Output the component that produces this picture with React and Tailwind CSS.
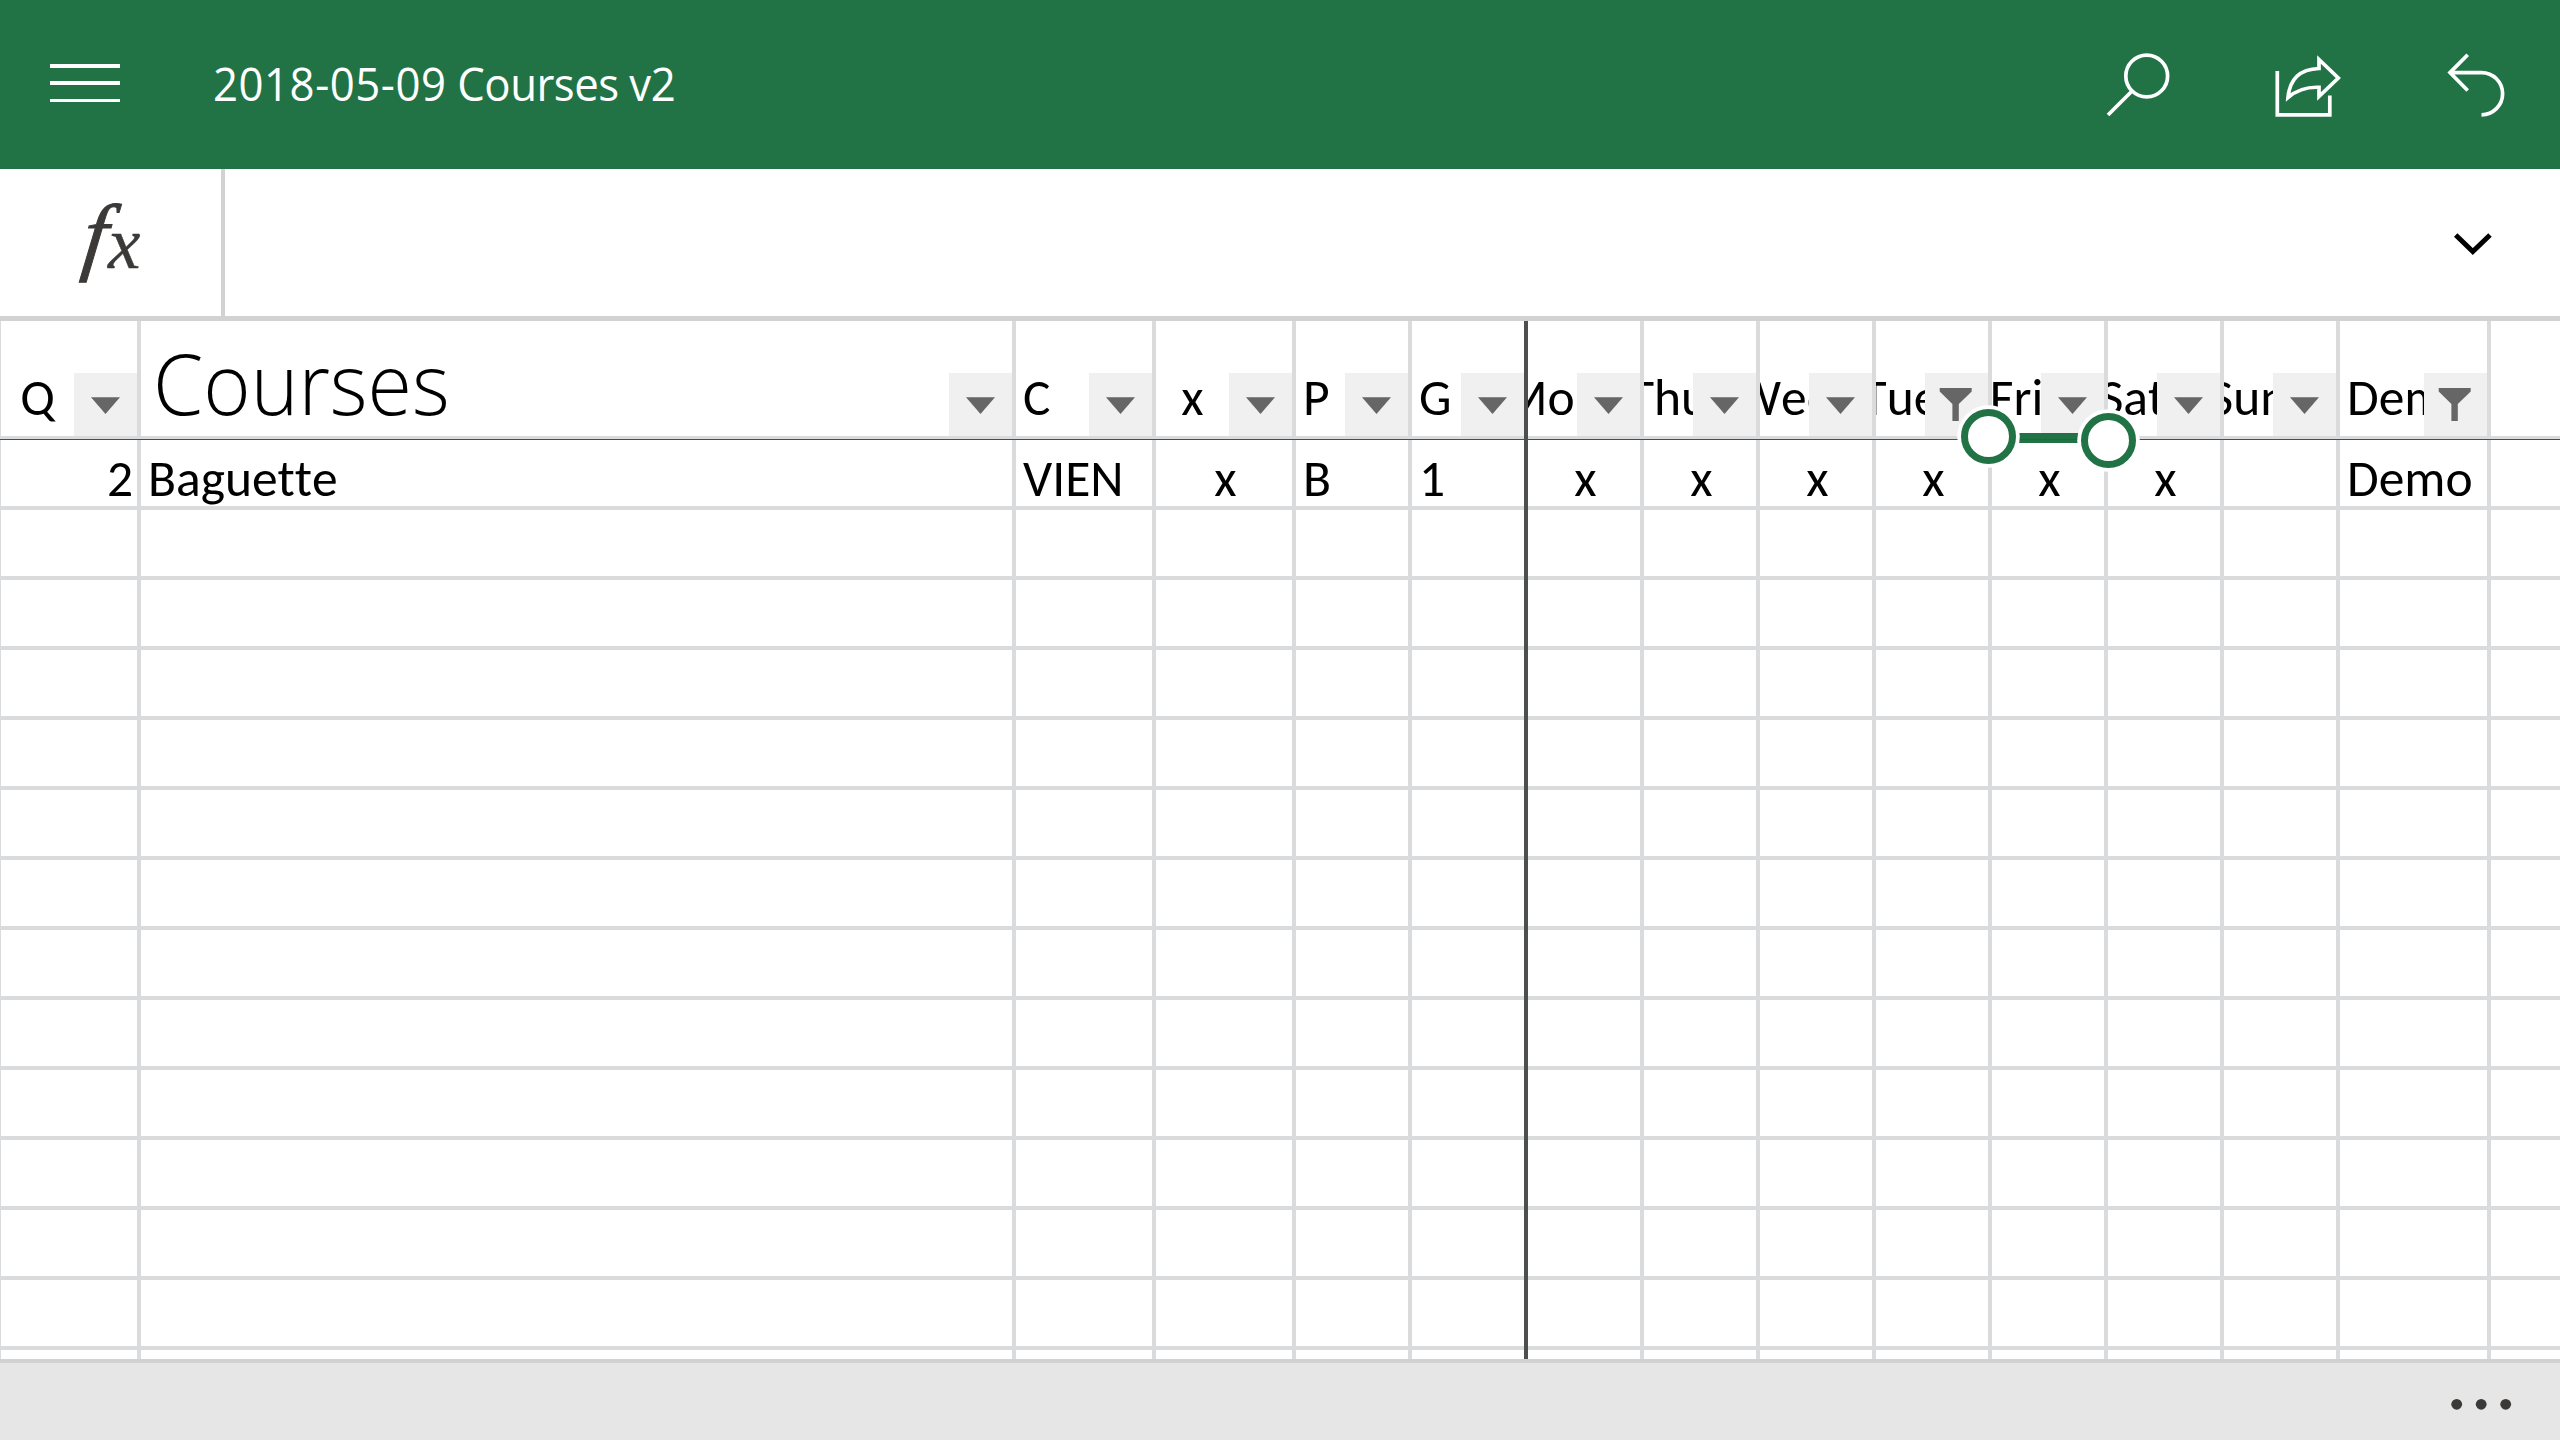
const cols = [
  { k: "Q", w: "w-[141px]", align: "center", v: "2", va: "right" },
  { k: "Courses", w: "w-[875px]", align: "title", v: "Baguette", va: "left" },
  { k: "C", w: "w-[140px]", align: "left", v: "VIEN", va: "left" },
  { k: "x", w: "w-[140px]", align: "center", v: "x", va: "center" },
  { k: "P", w: "w-[116px]", align: "left", v: "B", va: "left" },
  { k: "G", w: "w-[116px]", align: "left", v: "1", va: "left", frozen: true },
  { k: "Mon", w: "w-[116px]", align: "center", v: "x", va: "center" },
  { k: "Thu", w: "w-[116px]", align: "center", v: "x", va: "center" },
  { k: "Wed", w: "w-[116px]", align: "center", v: "x", va: "center" },
  { k: "Tue", w: "w-[116px]", align: "center", v: "x", va: "center", funnel: true },
  { k: "Fri", w: "w-[116px]", align: "center", v: "x", va: "center" },
  { k: "Sat", w: "w-[116px]", align: "center", v: "x", va: "center" },
  { k: "Sun", w: "w-[116px]", align: "center", v: "", va: "center" },
  { k: "Demo", w: "w-[151px]", align: "left", v: "Demo", va: "left", funnel: true },
  { k: "", w: "w-[69px]", align: "left", v: "", va: "left" },
];

function edge(i) {
  if (cols[i].frozen) return "border-r-4 border-[#4d4f4e]";
  if (i === 0) return "border-l border-r-4 border-[#dadbdd]";
  if (i === cols.length - 1) return "";
  return "border-r-4 border-[#dadbdd]";
}

const justify = { left: "justify-start pl-[7px]", center: "justify-center", right: "justify-end pr-1", title: "justify-start pl-3" };

function FilterButton({ funnel }) {
  return (
    <div className="mt-auto size-[63px] shrink-0 bg-[#f0f0f0]">
      <svg className="block size-[63px]" viewBox="0 0 63 63" fill="#666">
        {funnel ? <path d="M14.7 15H46.7V18.5L33.8 31V48H27.4V31L14.7 18.5Z" /> : <path d="M17 24.3H46L31.5 41Z" />}
      </svg>
    </div>
  );
}

function HeaderRow() {
  return (
    <div className="flex h-[119px] border-b border-[#4d4f4e]">
      {cols.map((c, i) => (
        <div key={i} className={`flex shrink-0 ${c.w} ${edge(i)}`}>
          <div className="flex w-full overflow-hidden border-b-[3px] border-[#dadbdd]">
            <div className={`flex min-w-0 flex-1 overflow-hidden ${justify[c.align]}`}>
              {c.align === "title" ? (
                <span className="shrink-0 origin-left scale-x-[0.963] text-[84px] leading-[123px] font-light whitespace-nowrap">{c.k}</span>
              ) : (
                <span className="shrink-0 font-['Carlito','Open_Sans',sans-serif] text-[51.5px] leading-[153px] whitespace-nowrap [font-kerning:none]">{c.k}</span>
              )}
            </div>
            {c.k && <FilterButton funnel={c.funnel} />}
          </div>
        </div>
      ))}
    </div>
  );
}

function Row({ filled }) {
  return (
    <div className="flex h-[70px] shrink-0">
      {cols.map((c, i) => (
        <div key={i} className={`flex shrink-0 ${c.w} ${edge(i)}`}>
          <div className={`flex w-full overflow-hidden border-b-4 border-[#dadbdd] ${justify[c.va]} ${c.va === "center" ? "pl-[3px]" : ""}`}>
            {filled && <span className="shrink-0 font-['Carlito','Open_Sans',sans-serif] text-[51.5px] leading-[77px] whitespace-nowrap [font-kerning:none] [font-variant-ligatures:none]">{c.v}</span>}
          </div>
        </div>
      ))}
    </div>
  );
}

export default function App() {
  return (
    <div className="flex h-[1440px] w-[2560px] flex-col overflow-hidden bg-white font-['Open_Sans',sans-serif] text-black">
      <header className="flex h-[169px] shrink-0 items-start bg-[#217346] text-white">
        <div className="mt-16 ml-[50px] flex w-[70px] flex-col gap-[13.5px]">
          <div className="h-[3.8px] bg-white" />
          <div className="h-[3.8px] bg-white" />
          <div className="h-[3.8px] bg-white" />
        </div>
        <h1 className="ml-[93px] origin-left scale-x-[0.951] text-[46px] leading-[166px] font-normal whitespace-nowrap">
          <span className="tracking-[0.55px]">2018-05-09</span>
          <span className="tracking-[-0.55px]"> Courses v2</span>
        </h1>
        <div className="mt-[50px] mr-12 ml-auto flex gap-24">
          <svg className="size-[72px]" viewBox="2104 50 72 72" fill="none" stroke="#fff" strokeWidth="3.7"><circle cx="2146.7" cy="76" r="20.9" /><path d="M2131.8 91.2L2108 115" /></svg>
          <svg className="size-[72px]" viewBox="2272 50 72 72" fill="none" stroke="#fff" strokeWidth="3.7"><path d="M2277.3 71V114.8H2329.8V95.5M2319 59.5L2338.3 78L2319 96.5V87.3Q2301 86.5 2288 97.5Q2290.5 69.5 2319 68.5Z" /></svg>
          <svg className="size-[72px]" viewBox="2440 50 72 72" fill="none" stroke="#fff" strokeWidth="3.7"><path d="M2467.7 54.8L2450 72.6L2467.7 90.5M2450 72.6H2481.5A21 21 0 0 1 2481.5 114.8" /></svg>
        </div>
      </header>
      <div className="flex h-[152px] shrink-0 border-b-[5px] border-[#d2d2d2]">
        <div className="w-[225px] border-r-4 border-[#d2d2d2]">
          <svg className="h-[147px] w-[221px] font-['Liberation_Serif',serif] italic" viewBox="0 169 221 147" fill="#3b3a38" stroke="#3b3a38">
            <text transform="translate(80.5 264) skewX(-7)" fontSize="86" strokeWidth="1">f</text>
            <text x="108" y="268" fontSize="73" strokeWidth="0.4">x</text>
          </svg>
        </div>
        <svg className="mt-14 mr-16 ml-auto h-9 w-12" viewBox="2448 225 48 36" fill="none" stroke="#000" strokeWidth="5"><path d="M2455.7 235L2472.8 251.5L2490 235" /></svg>
      </div>
      <main className="relative h-[1038px] shrink-0 overflow-hidden">
        <HeaderRow />
        <Row filled />
        {Array.from({ length: 13 }, (_, i) => <Row key={i} />)}
        <svg className="absolute top-[79px] left-[1950px] h-20 w-[200px]" viewBox="1950 400 200 80">
          <path d="M1989 433H2108V443H1989Z" fill="#217346" />
          <path d="M1989 439H2108V440H1989Z" fill="#4d4f4e" />
          <circle cx="1988.5" cy="436.5" r="31.3" fill="#fff" />
          <circle cx="2108.5" cy="440.5" r="31.3" fill="#fff" />
          <circle cx="1988.5" cy="436.5" r="24" fill="#fff" stroke="#217346" strokeWidth="7" />
          <circle cx="2108.5" cy="440.5" r="24" fill="#fff" stroke="#217346" strokeWidth="7" />
        </svg>
      </main>
      <footer className="flex h-[81px] shrink-0 border-t-4 border-[#d2d2d2] bg-[#e6e6e6]">
        <svg className="mt-[31px] mr-12 ml-auto h-5 w-16" viewBox="2448 1394 64 20" fill="#3b3a38"><circle cx="2456.7" cy="1404.3" r="5.4" /><circle cx="2481.2" cy="1404.3" r="5.4" /><circle cx="2505.7" cy="1404.3" r="5.4" /></svg>
      </footer>
    </div>
  );
}
